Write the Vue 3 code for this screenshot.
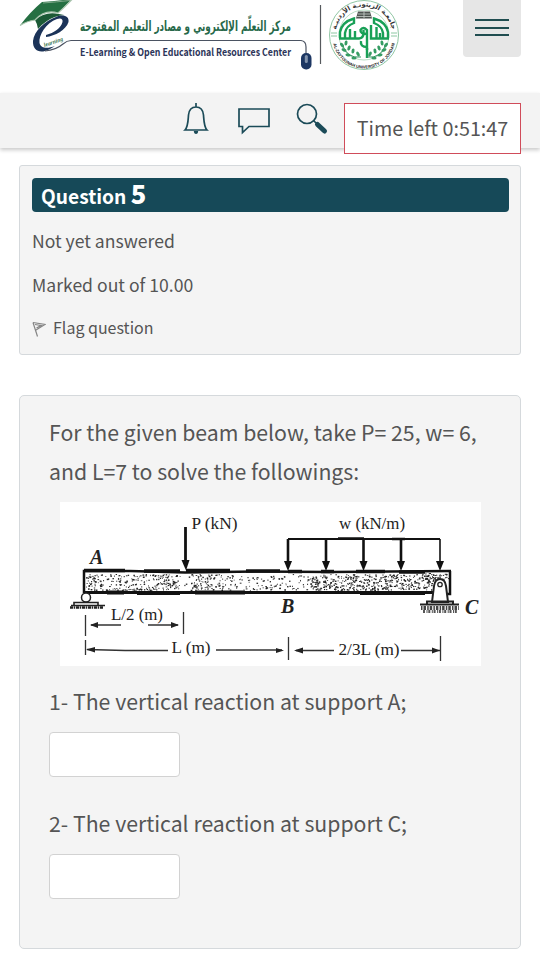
<template>
  <div class="page">
    <header class="top">
      <svg class="logo" width="384" height="80" viewBox="18 0 384 80">
        <!-- graduation cap and e -->
        <path d="M35 20 Q45 11 59 14 L64 15 Q54 16 47 21 Q41 25 38 29 Q37 23 35 20 Z" fill="#1c5a36" />
        <path d="M20 25.500 Q30 12 42 2 Q55 1 72 -1 Q64 7 58 13 Q44 9 35 20 Q26 21 20 25.500 Z" fill="#256f42" />
        <path d="M20 25.500 Q27 21 35 20 Q45 9 58 13 Q65 7 72 -.5" fill="none" stroke="#a9c4ad" stroke-width="1.200" />
        <path d="M43 3 Q56 2 70 .5" fill="none" stroke="#7fa78a" stroke-width="1" />
        <path d="M46 37 C55 36 66 30 68.500 22 C69.500 16 63 14 56 17 C45 21 34 31 33 41 C32.500 49 38 53 45 51 C48 50.500 52 48 55 46 C48 48.500 41 49 39.500 43 C38.500 35 46 23 57 19 C61 17.500 63 19 62.500 22 C61 28 54 33 46 35 Z" fill="#1b3358" />
        <text class="tiny" x="44.500" y="47" transform="rotate(-19 44.500 47)" textLength="20" lengthAdjust="spacingAndGlyphs">learning</text>
        <path d="M45 51 Q56 50 63 44 Q67 40.500 71 40.500 H301 Q306 41 306 47 V53" fill="none" stroke="#4b5362" stroke-width="1.200" />
        <rect x="301" y="53" width="10.500" height="16.500" rx="5" fill="#1d3763" />
        <rect x="304.800" y="55" width="3" height="8" rx="1.500" fill="#8294ad" />
        <text class="arabic" x="185.500" y="30.500" text-anchor="middle" direction="rtl" textLength="211" lengthAdjust="spacingAndGlyphs">مركز التعلّم الإلكتروني و مصادر التعليم المفتوحة</text>
        <text class="center-name" x="80" y="56" textLength="211" lengthAdjust="spacingAndGlyphs">E-Learning &amp; Open Educational Resources Center</text>
        <path d="M320.500 5 V64" stroke="#56595d" stroke-width="1.200" />
        <!-- university seal -->
        <circle cx="364" cy="35" r="34.500" fill="#fff" stroke="#8fc6a3" stroke-width="1" />
        <circle cx="364" cy="35" r="25" fill="none" stroke="#a5d4b5" stroke-width=".8" />
        <path id="sealTop" d="M335.500 35 A28.500 28.500 0 0 1 392.500 35" fill="none" />
        <path id="sealBottom" d="M332.500 37 A31.500 31.500 0 0 0 395.500 37" fill="none" />
        <text class="seal-ar" text-anchor="middle"><textPath href="#sealTop" startOffset="50%">جامعـة الزيتونـة الأردنيـة</textPath></text>
        <text class="seal-en" text-anchor="middle"><textPath href="#sealBottom" startOffset="50%">AL-ZAYTOONAH UNIVERSITY OF JORDAN</textPath></text>
        <path d="M356 18.500 L358 11.500 H370 L372 18.500 Z" fill="#4e5551" />
        <path d="M358 14 H370 M357 16.500 H371 M364 11.500 V18" stroke="#c9d0cb" stroke-width=".8" />
        <!-- green calligraphy -->
        <g fill="none" stroke="#18a056" stroke-width="2.400">
          <path d="M340 38 V32 Q342 22 354 18.500 V23 Q346 26 345 33 V38" />
          <path d="M388 38 V32 Q386 22 374 18.500 V23 Q382 26 383 33 V38" />
          <path d="M339 38.500 H359 Q363.500 38 363.500 33 V30 M350 29 V38 M355 31 V38" />
          <path d="M389 38.500 H371 V25 M376.500 27 V38 M380 33 V38" />
          <path d="M367 50 V30 Q363 26 360.500 30 Q360 34 367 34" />
          <path d="M367 47 Q360 47 361 41 M367 48 V58" />
        </g>
        <path d="M342 44 Q347 59 361 57 M386 44 Q381 59 367 57" fill="none" stroke="#349261" stroke-width="1" />
        <g fill="#359c63">
          <ellipse v-for="(leaf, i) in leaves" :key="i" :cx="leaf[0]" :cy="leaf[1]" rx="2.600" ry="1.500" :transform="`rotate(${leaf[2]} ${leaf[0]} ${leaf[1]})`" />
        </g>
        <path d="M331 33 H337 M331 36 H337 M391 33 H397 M391 36 H397" stroke="#8cc8a2" stroke-width="1" />
      </svg>
      <button class="menu" aria-label="Menu"><span></span><span></span><span></span></button>
    </header>

    <nav class="toolbar">
      <svg class="icon" width="26" height="34" viewBox="0 0 26 34">
        <path d="M13 1 V5 M2 28 C5 25 5 20 5.500 13 C6 8 8 5 13 5 C18 5 20 8 20.500 13 C21 20 21 25 24 28 Z" />
        <path d="M10.800 29 H15.200 Q15 32 13 32 Q11 32 10.800 29" class="solid" />
      </svg>
      <svg class="icon" width="34" height="34" viewBox="0 0 34 34">
        <path d="M2 7 H32 V24.500 H12 L5.500 30.500 V24.500 H2 Z" />
      </svg>
      <svg class="icon" width="34" height="34" viewBox="0 0 34 34">
        <circle cx="12" cy="12" r="9.500" />
        <path d="M18.500 18.500 L22 22" />
        <path d="M22.500 22.500 L29.500 29" class="handle" />
      </svg>
      <div class="timer">Time left 0:51:47</div>
    </nav>

    <main>
      <section class="info">
        <h3>Question <b>{{ question.number }}</b></h3>
        <p class="state">{{ question.state }}</p>
        <p class="grade">{{ question.grade }}</p>
        <p class="flag">
          <svg width="14" height="17" viewBox="0 0 14 17">
            <path d="M1 1.500 L5.500 15.500 M1 1.500 L13 3.500 L4 9 M3 3.500 L9 4.500 L4.500 7" fill="none" stroke="#858585" stroke-width="1.200" />
          </svg>
          <span>Flag question</span>
        </p>
      </section>

      <section class="content">
        <p class="stem">For the given beam below, take P= 25, w= 6,<br />and L=7 to solve the followings:</p>
        <svg class="beam" width="421" height="164" viewBox="60 502 421 164">
          <rect x="60" y="502" width="421" height="164" fill="#fff" />
          <g fill="#222">
            <rect v-for="(d, i) in specks" :key="i" :x="d.x" :y="d.y" :width="d.w" :height="d.h" />
          </g>
          <g fill="none" stroke="#111">
            <path d="M84 593 V571 H130 L185 572.500 L260 571.500 L330 572 L451 571" stroke-width="2.500" />
            <path d="M84 570.500 H125 M144 571 H180 M186 570.500 H230 M246 571 H280 M288 571.500 H302 M321 571.500 H334 M356 571.500 H385 M399 572 H425" stroke-width="3.500" />
            <path d="M84 592.500 H433" stroke-width="3" />
            <path d="M107 592.500 H124 M137 593 H180 M195 592.500 H245 M360 593 H425" stroke-width="4" />
            <path d="M450 571 V594 H446" stroke-width="2.500" />
            <path d="M288 539 H440" stroke-width="2" />
            <path d="M338 538.500 H364 M392 539 H405" stroke-width="2.500" />
            <path d="M185.500 527 V563" stroke-width="2.800" />
            <path v-for="x in loads" :key="x" :d="`M${x} 539 V564`" :stroke-width="x > 420 ? 1.6 : 2.6" />
          </g>
          <path d="M181.500 560 H189.500 L186 570.500 Z" fill="#111" />
          <path v-for="x in loads" :key="'h' + x" :d="`M${x - 4} 561 H${x + 4} L${x} 571 Z`" fill="#111" />
          <!-- roller at A -->
          <circle cx="86" cy="597.500" r="4.500" fill="#fff" stroke="#222" stroke-width="1.500" />
          <path d="M74 605 V602.500 H98 V605 M71 605.500 H105" fill="none" stroke="#222" stroke-width="1.600" />
          <path d="M70 607.500 H103" stroke="#222" stroke-width="2.500" stroke-dasharray="3 .7 1.500 .8" />
          <!-- pin at C -->
          <path d="M432 602 L434 586 Q435 579 440 579 Q445 579 446 586 L448 602 Z" fill="#fff" stroke="#222" stroke-width="2" />
          <circle cx="440" cy="584.500" r="2.200" fill="#fff" stroke="#222" stroke-width="1.300" />
          <path d="M427 604 V601.500 H453 V604 M420 604.500 H459" fill="none" stroke="#222" stroke-width="2" />
          <path d="M421 608 H459" stroke="#444" stroke-width="4" stroke-dasharray="1.500 1 2.500 1.200" />
          <path d="M423 611.500 H458" stroke="#555" stroke-width="3" stroke-dasharray="2 1.500 1 .8" />
          <!-- dimension lines -->
          <g stroke="#333" stroke-width="1.300" fill="none">
            <path d="M85.500 615 V636 M85.500 640 V655 M183.500 612 V634 M288.500 637 V660 M440.500 636 V661" />
            <path d="M91 625 H121 M148 625 H178 M87 649.500 L125 650.500 H168 M216 650 H282 M296 650.500 H334 M401 650.500 H440" />
          </g>
          <path d="M90 625 L98 622 V628 Z M179 625 L171 622 V628 Z M86 649.500 L95 647 V652.500 Z M284 650.500 L276 648 V653 Z M294 650.500 L303 647.500 V653.500 Z M440 650.500 L432 647.500 V653.500 Z" fill="#222" />
          <g class="dim">
            <text x="191.500" y="529" textLength="46" lengthAdjust="spacingAndGlyphs">P (kN)</text>
            <text x="339" y="529" textLength="66" lengthAdjust="spacingAndGlyphs">w (kN/m)</text>
            <text x="111" y="619.500" textLength="52" lengthAdjust="spacingAndGlyphs">L/2 (m)</text>
            <text x="171.500" y="653" textLength="39" lengthAdjust="spacingAndGlyphs">L (m)</text>
            <text x="338.500" y="655" textLength="61" lengthAdjust="spacingAndGlyphs">2/3L (m)</text>
          </g>
          <g class="node">
            <text x="90" y="564">A</text>
            <text x="281" y="613">B</text>
            <text x="465" y="614">C</text>
          </g>
        </svg>
        <div v-for="part in parts" :key="part.id" class="part">
          <label :for="part.id">{{ part.label }}</label>
          <input :id="part.id" v-model="part.answer" type="text" />
        </div>
      </section>
    </main>
  </div>
</template>

<script setup>
import { ref } from 'vue'

const question = {
  number: 5,
  state: 'Not yet answered',
  grade: 'Marked out of 10.00'
}

const parts = ref([
  { id: 'a', label: '1- The vertical reaction at support A;', answer: '' },
  { id: 'c', label: '2- The vertical reaction at support C;', answer: '' }
])

// distributed load arrows
const loads = [288, 326, 363.5, 401, 440]

const leaves = [
  [342, 45, 50], [346, 43, 100], [344, 50, 20], [349, 48, 110], [348, 55, 10],
  [353, 51, 100], [354, 58, 0], [358, 54, 60],
  [386, 45, 130], [382, 43, 80], [384, 50, 160], [379, 48, 70], [380, 55, 170],
  [375, 51, 80], [374, 58, 0], [370, 54, 120]
]

// concrete texture, the seed keeps it the same on every render
function makeSpecks() {
  let seed = 17
  const rand = () => {
    seed = (seed * 16807) % 2147483647
    return seed / 2147483647
  }
  const list = []
  while (list.length < 900) {
    const x = 86 + rand() * 348
    const y = 574 + rand() * 16
    const density = x < 103 ? 1 : x < 130 ? 0.5 : x < 178 ? 0.9 : x < 190 ? 0.3 : x < 225 ? 0.8 : x < 310 ? 0.35 : 1
    if (rand() > density) continue
    list.push({ x, y, w: 0.7 + rand() * 1.1, h: 0.7 + rand() * 0.8 })
  }
  for (let i = 0; i < 50; i++) {
    list.push({ x: 425 + rand() * 23, y: 573 + rand() * 8, w: 1.3, h: 1 })
  }
  return list
}
const specks = makeSpecks()
</script>

<style>
body {
  margin: 0;
  background: #fff;
}
</style>

<style scoped>
.page {
  width: 540px;
  height: 959px;
  overflow: hidden;
  background: #fff;
  color: #555;
  font-family: "Noto Sans CJK SC", "Noto Sans", sans-serif;
}
p, h3 {
  margin: 0;
}
.top {
  display: flex;
  justify-content: space-between;
  align-items: flex-start;
  height: 93px;
  padding: 0 19px 0 18px;
}
.logo {
  display: block;
}
.arabic {
  font: bold 14px "DejaVu Sans", sans-serif;
  fill: #27694a;
}
.center-name {
  font: bold 10.5px "Noto Sans CJK SC", "Open Sans", sans-serif;
  fill: #2b3458;
}
.tiny {
  font: italic bold 6px "Liberation Serif", serif;
  fill: #35704b;
}
.seal-ar {
  font: bold 6.6px "DejaVu Sans", sans-serif;
  fill: #333;
}
.seal-en {
  font: bold 4.2px "Liberation Sans", sans-serif;
  fill: #222;
}
.menu {
  display: flex;
  flex-direction: column;
  align-items: center;
  gap: 5.5px;
  width: 58px;
  height: 57px;
  padding: 19px 0 0;
  border: 0;
  border-radius: 0 0 4px 4px;
  background: #e6e6e6;
}
.menu span {
  width: 34px;
  height: 2px;
  background: #204d50;
}
.toolbar {
  position: relative;
  display: flex;
  align-items: flex-start;
  gap: 25px;
  box-sizing: border-box;
  height: 55px;
  padding: 9px 0 0 183px;
  background: #f3f3f3;
  box-shadow: 0 2px 4px rgba(0, 0, 0, 0.22);
}
.icon {
  fill: none;
  stroke: #1b4b58;
  stroke-width: 1.7;
}
.icon + .icon {
  margin-left: 3px;
}
.icon + .icon + .icon {
  margin-left: -1px;
}
.solid {
  fill: #1b4b58;
  stroke: none;
}
.handle {
  stroke-width: 5;
  stroke-linecap: round;
}
.timer {
  position: absolute;
  top: 10px;
  right: 19px;
  box-sizing: border-box;
  width: 177px;
  height: 51px;
  border: 1px solid #d04c5a;
  background: #fff;
  font-size: 19.75px;
  line-height: 48px;
  text-align: center;
  white-space: nowrap;
}
main {
  display: flex;
  flex-direction: column;
  gap: 40px;
  padding: 17px 19px 0 19px;
}
.info,
.content {
  box-sizing: border-box;
  border: 1px solid #d5d9dc;
  background: #f4f4f4;
}
.info {
  height: 190px;
  padding: 12px 11px 0 12px;
  border-radius: 3px;
}
.info h3 {
  height: 34px;
  padding-left: 9px;
  border-radius: 4px;
  background: #164958;
  color: #fff;
  font-size: 19.2px;
  font-weight: bold;
  line-height: 37px;
  white-space: nowrap;
}
.info h3 b {
  font-size: 25.5px;
  line-height: 30px;
}
.info p {
  font-size: 17.6px;
  line-height: 26px;
}
.info .state {
  margin-top: 16px;
}
.info .grade {
  margin-top: 18px;
}
.info .flag {
  display: flex;
  align-items: center;
  gap: 7px;
  margin-top: 16px;
  font-size: 16px;
}
.flag svg {
  margin-top: 5px;
}
.content {
  height: 554px;
  padding: 16px 29px 0;
  border-radius: 5px;
  font-size: 21.27px;
}
.stem {
  line-height: 39px;
  white-space: nowrap;
}
.beam {
  display: block;
  margin: 12px 0 0 11px;
}
.dim {
  font: 16.5px "Liberation Serif", serif;
  fill: #222;
}
.node {
  font: italic bold 20px "Liberation Serif", serif;
  fill: #222;
}
.part {
  display: flex;
  flex-direction: column;
  margin-top: 15px;
}
.part + .part {
  margin-top: 26px;
}
.part label {
  line-height: 39px;
  white-space: nowrap;
}
.part input {
  box-sizing: border-box;
  width: 131px;
  height: 45px;
  margin-top: 12px;
  padding: 0 10px;
  border: 1px solid #d2d2d2;
  border-radius: 4px;
  background: #fff;
  font: inherit;
}
</style>
